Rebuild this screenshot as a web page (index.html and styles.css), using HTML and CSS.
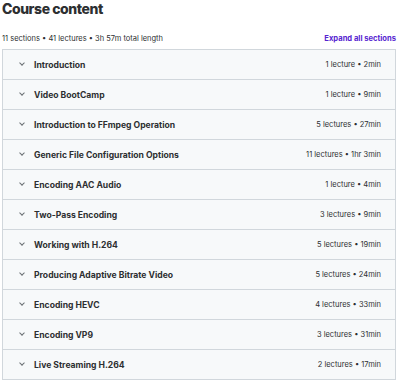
FILE: index.html
```html
<!DOCTYPE html>
<html lang="en">
<head>
    <meta charset="UTF-8">
    <title>Course content</title>
    <link rel="stylesheet" href="styles.css">
</head>
<body>
    <div class="course-content">
        <h2>Course content</h2>
        <div class="summary">
            <span>11 sections • 41 lectures • 3h 57m total length</span>
            <a href="#" class="expand">Expand all sections</a>
        </div>
        <div class="sections">
            <div class="section"><span class="chev"></span><span class="title">Introduction</span><span class="meta">1 lecture • 2min</span></div>
            <div class="section"><span class="chev"></span><span class="title">Video BootCamp</span><span class="meta">1 lecture • 9min</span></div>
            <div class="section"><span class="chev"></span><span class="title">Introduction to FFmpeg Operation</span><span class="meta">5 lectures • 27min</span></div>
            <div class="section"><span class="chev"></span><span class="title">Generic File Configuration Options</span><span class="meta">11 lectures • 1hr 3min</span></div>
            <div class="section"><span class="chev"></span><span class="title">Encoding AAC Audio</span><span class="meta">1 lecture • 4min</span></div>
            <div class="section"><span class="chev"></span><span class="title">Two-Pass Encoding</span><span class="meta">3 lectures • 9min</span></div>
            <div class="section"><span class="chev"></span><span class="title">Working with H.264</span><span class="meta">5 lectures • 19min</span></div>
            <div class="section"><span class="chev"></span><span class="title">Producing Adaptive Bitrate Video</span><span class="meta">5 lectures • 24min</span></div>
            <div class="section"><span class="chev"></span><span class="title">Encoding HEVC</span><span class="meta">4 lectures • 33min</span></div>
            <div class="section"><span class="chev"></span><span class="title">Encoding VP9</span><span class="meta">3 lectures • 31min</span></div>
            <div class="section"><span class="chev"></span><span class="title">Live Streaming H.264</span><span class="meta">2 lectures • 17min</span></div>
        </div>
    </div>
</body>
</html>
```

FILE: styles.css
```css
body {
    margin: 0;
    background-color: #fff;
    color: #2d2f31;
    font-family: 'Inter', sans-serif;
}
.course-content {
    padding: 0 4px 0 2px;
}
h2 {
    margin: 0;
    font-size: 14px;
    font-weight: 800;
    line-height: 17px;
    letter-spacing: -0.45px;
}
.summary {
    display: flex;
    justify-content: space-between;
    align-items: flex-end;
    height: 32px;
    padding-bottom: 6px;
    box-sizing: border-box;
    font-size: 7.5px;
    color: #2d2f31;
}
.expand {
    color: #5624d0;
    font-weight: 700;
    text-decoration: none;
    font-size: 7.6px;
}
.sections {
    border: 1px solid #d1d7dc;
}
.section {
    display: flex;
    align-items: center;
    height: 29px;
    padding: 0 14px 0 15px;
    background-color: #f7f9fa;
    border-bottom: 1px solid #d1d7dc;
}
.section:last-child {
    border-bottom: none;
}
.chev {
    width: 3px;
    height: 3px;
    border-right: 1px solid #6a6f73;
    border-bottom: 1px solid #6a6f73;
    transform: rotate(45deg);
    margin: 0 10px -1px 2px;
    position: relative;
    top: -2px;
}
.title {
    flex: 1;
    font-size: 8.6px;
    font-weight: 700;
}
.meta {
    font-size: 7.5px;
    color: #2d2f31;
}
```
